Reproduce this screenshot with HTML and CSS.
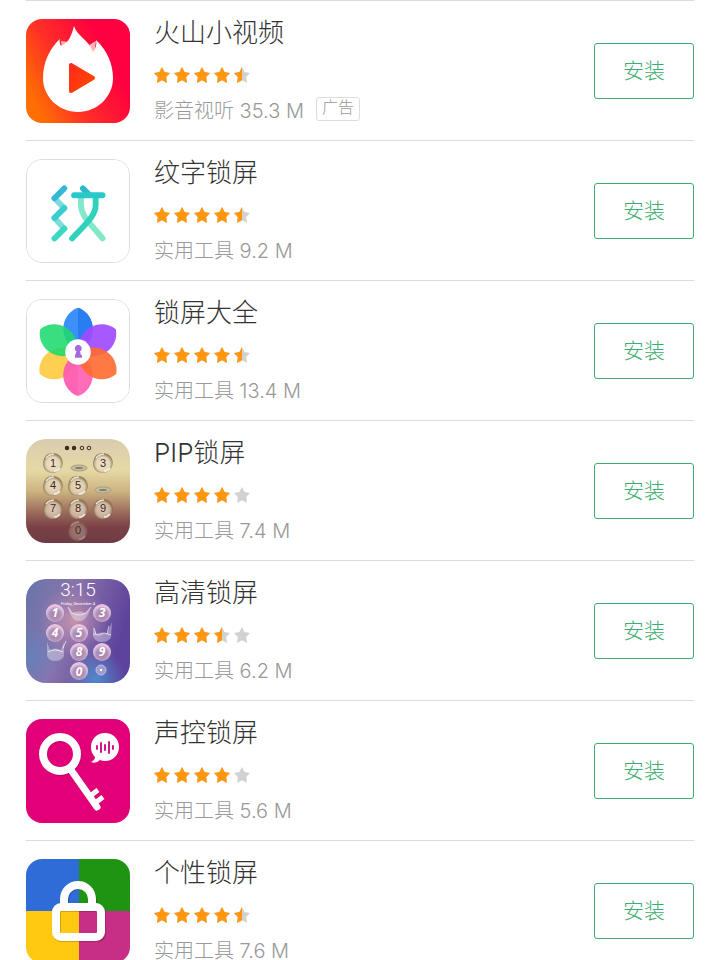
FILE: index.html
```
<!DOCTYPE html>
<html lang="zh-CN">

<head>
    <meta charset="UTF-8" />
    <meta name="viewport" content="width=device-width, initial-scale=1" />
    <title>锁屏</title>
    <link rel="stylesheet" href="styles.css">
</head>

<body>
    <!-- shared star rows -->
    <svg class="defs" aria-hidden="true">
        <defs>
            <path id="star" d="M8 0 L10.6 5 L16 6 L12.2 10 L13 16 L8 13.2 L3 16 L3.800 10 L0 6 L5.400 5Z" />
            <g id="five">
                <use href="#star" /><use href="#star" x="20" /><use href="#star" x="40" /><use href="#star" x="60" /><use href="#star" x="80" />
            </g>
            <clipPath id="c35"><rect width="68" height="16" /></clipPath>
            <clipPath id="c40"><rect width="78" height="16" /></clipPath>
            <clipPath id="c45"><rect width="88" height="16" /></clipPath>
        </defs>
    </svg>

    <ul class="app-list">
        <li class="app">
            <svg class="icon" viewBox="0 0 104 104" aria-hidden="true">
                <defs>
                    <linearGradient id="fire" x1="0" y1="0.9" x2="0.85" y2="0.45">
                        <stop offset="0" stop-color="#ff7200" /><stop offset="0.15" stop-color="#ff6a05" /><stop offset="0.5" stop-color="#ff3026" /><stop offset="1" stop-color="#ff0040" />
                    </linearGradient>
                    <linearGradient id="play" x2="1" y2="1"><stop stop-color="#ff2a1c" /><stop offset="1" stop-color="#ff4a00" /></linearGradient>
                </defs>
                <rect width="104" height="104" fill="url(#fire)" />
                <path d="M35 22 L36 30 L42 23Z M63 26 L68 36 L70 22Z" fill="#ffb5b5" />
                <path d="M48 7 C51 17 62 20 67 33 C70 29 71 25 70 21 C81 31 87 45 87 59 C87 78 71 93 52 93 C33 93 17 78 17 59 C17 43 24 29 34 20 C33 23 34 25 35 27 C43 24 46 15 48 7Z" fill="#fff" />
                <path d="M45 46 V72 L67 59Z" fill="url(#play)" stroke="url(#play)" stroke-width="4" stroke-linejoin="round" />
            </svg>
            <div class="info">
                <h2>火山小视频</h2>
                <svg class="stars" viewBox="0 0 96 16" role="img" aria-label="4.5"><use href="#five" class="off" /><use href="#five" class="on" clip-path="url(#c45)" /></svg>
                <p>影音视听 35.3 M <span class="ad">广告</span></p>
            </div>
            <button type="button">安装</button>
        </li>

        <li class="app">
            <svg class="icon outlined" viewBox="0 0 104 104" aria-hidden="true">
                <rect width="104" height="104" fill="#fff" />
                <g fill="none" stroke-width="6" stroke-linecap="round" stroke-linejoin="round">
                    <path d="M28 39 L38 49 M28 59 L38 70" stroke="#7edcdc" />
                    <path d="M38 29 L28 39" stroke="#35b8d8" />
                    <path d="M38 49 L28 59" stroke="#38cccf" />
                    <path d="M38 70 L28 80" stroke="#3bd8c4" />
                    <path d="M57 29 L62 34" stroke="#2cb9cd" />
                    <path d="M55 38 V46 C55 57 65 65 77 80" stroke="#83e8ca" />
                    <path d="M70 38 V46 C70 57 60 65 46 80" stroke="#30d2bc" />
                    <path d="M48 36 H77" stroke="#2ac9c9" />
                </g>
            </svg>
            <div class="info">
                <h2>纹字锁屏</h2>
                <svg class="stars" viewBox="0 0 96 16" role="img" aria-label="4.5"><use href="#five" class="off" /><use href="#five" class="on" clip-path="url(#c45)" /></svg>
                <p>实用工具 9.2 M</p>
            </div>
            <button type="button">安装</button>
        </li>

        <li class="app">
            <svg class="icon outlined" viewBox="0 0 104 104" aria-hidden="true">
                <defs>
                    <path id="petal" d="M52 8 C61 11 67 20 67 29 C67 41 60 48 52 53 C44 48 37 41 37 29 C37 20 43 11 52 8Z" />
                    <path id="petal-half" d="M52 8 C61 11 67 20 67 29 C67 41 60 48 52 53Z" />
                </defs>
                <rect width="104" height="104" fill="#fff" />
                <use href="#petal" fill="#3d8ffa" />
                <use href="#petal-half" fill="#2a7df0" />
                <use href="#petal" fill="#ffc83a" opacity=".88" transform="rotate(240 52 53)" />
                <use href="#petal" fill="#ff5fb4" opacity=".92" transform="rotate(180 52 53)" />
                <use href="#petal-half" fill="#f04a9f" opacity=".2" transform="rotate(180 52 53)" />
                <use href="#petal" fill="#a04bff" opacity=".92" transform="rotate(59 52 53)" />
                <use href="#petal" fill="#ff6a30" opacity=".9" transform="rotate(120 52 53)" />
                <use href="#petal" fill="#1edb6c" opacity=".88" transform="rotate(301 52 53)" />
                <circle cx="52" cy="53" r="13" fill="#fff" />
                <path d="M52 45.500 a3.800 3.800 0 0 1 2 7 L55 56 H56 V59 H49 V56 L50.500 52.500 a3.800 3.800 0 0 1 1.500 -7Z" fill="#a868e0" />
            </svg>
            <div class="info">
                <h2>锁屏大全</h2>
                <svg class="stars" viewBox="0 0 96 16" role="img" aria-label="4.5"><use href="#five" class="off" /><use href="#five" class="on" clip-path="url(#c45)" /></svg>
                <p>实用工具 13.4 M</p>
            </div>
            <button type="button">安装</button>
        </li>

        <li class="app">
            <svg class="icon rounder" viewBox="0 0 104 104" aria-hidden="true">
                <defs>
                    <linearGradient id="sand" x2="0" y2="1">
                        <stop stop-color="#d9ccb0" /><stop offset=".3" stop-color="#e6d9a5" /><stop offset=".5" stop-color="#cdb480" /><stop offset=".72" stop-color="#97665a" /><stop offset=".85" stop-color="#7a4046" /><stop offset="1" stop-color="#6e3c44" />
                    </linearGradient>
                    <radialGradient id="drop" cx=".5" cy=".55">
                        <stop stop-color="#f4e9d8" stop-opacity=".75" /><stop offset=".7" stop-color="#e4d6bc" stop-opacity=".65" /><stop offset="1" stop-color="#7a6448" stop-opacity=".75" />
                    </radialGradient>
                    <g id="drop-key"><path d="M-9 -4 C-7 -12 6 -12 9 -4 C12 3 6 10 0 10 C-8 10 -12 3 -9 -4Z" fill="url(#drop)" /><path d="M-7 -5 Q-4 -9 1 -9 M7 5 Q5 8 1 8" fill="none" stroke="#fff" stroke-opacity=".75" stroke-width="1.500" /></g>
                </defs>
                <rect width="104" height="104" fill="url(#sand)" />
                <g fill="#3a2a1c"><circle cx="41" cy="9" r="2.200" /><circle cx="48" cy="9" r="2.200" /></g>
                <g fill="none" stroke="#3a2a1c"><circle cx="56" cy="9" r="1.800" /><circle cx="63" cy="9" r="1.800" /></g>
                <use href="#drop-key" x="27" y="24" /><use href="#drop-key" x="77" y="24" />
                <use href="#drop-key" x="27" y="47" /><use href="#drop-key" x="52" y="47" />
                <use href="#drop-key" x="27" y="70" /><use href="#drop-key" x="52" y="70" /><use href="#drop-key" x="77" y="70" />
                <use href="#drop-key" x="52" y="92" opacity=".45" />
                <g fill="#c4bda2" stroke="#a89f82"><ellipse cx="53" cy="29" rx="8" ry="3" /><ellipse cx="77" cy="51" rx="8" ry="3" /></g>
                <g fill="#847c68"><ellipse cx="53" cy="29" rx="4" ry="1" /><ellipse cx="77" cy="51" rx="4" ry="1" /></g>
                <g class="thin-digits">
                    <text x="27" y="28">1</text><text x="77" y="28">3</text>
                    <text x="27" y="50">4</text><text x="52" y="50">5</text>
                    <text x="27" y="73">7</text><text x="52" y="73">8</text><text x="77" y="73">9</text>
                    <text x="52" y="95">0</text>
                </g>
            </svg>
            <div class="info">
                <h2>PIP锁屏</h2>
                <svg class="stars" viewBox="0 0 96 16" role="img" aria-label="4"><use href="#five" class="off" /><use href="#five" class="on" clip-path="url(#c40)" /></svg>
                <p>实用工具 7.4 M</p>
            </div>
            <button type="button">安装</button>
        </li>

        <li class="app">
            <svg class="icon rounder" viewBox="0 0 104 104" aria-hidden="true">
                <defs>
                    <linearGradient id="dusk" x2="1" y2=".3"><stop stop-color="#6875a8" /><stop offset=".45" stop-color="#8a74ac" /><stop offset="1" stop-color="#5e439c" /></linearGradient>
                    <radialGradient id="glow"><stop stop-color="#d39aaa" stop-opacity=".85" /><stop offset="1" stop-color="#b084b4" stop-opacity="0" /></radialGradient>
                    <radialGradient id="teal"><stop stop-color="#4c8fd0" stop-opacity=".9" /><stop offset="1" stop-color="#4c8fd0" stop-opacity="0" /></radialGradient>
                    <radialGradient id="pearl" cx=".5" cy=".6"><stop stop-color="#a9799f" /><stop offset=".65" stop-color="#b394bd" /><stop offset="1" stop-color="#dcc8e2" /></radialGradient>
                    <g id="pearl-key"><circle r="9" fill="url(#pearl)" /><path d="M-6 -5 Q0 -10 6 -5" fill="none" stroke="#f0bedc" stroke-width="2" /></g>
                </defs>
                <rect width="104" height="104" fill="url(#dusk)" />
                <circle cx="48" cy="42" r="36" fill="url(#glow)" />
                <circle cx="70" cy="100" r="30" fill="url(#teal)" />
                <circle cx="6" cy="78" r="32" fill="url(#teal)" opacity=".45" />
                <use href="#pearl-key" x="29" y="34" /><use href="#pearl-key" x="76" y="34" />
                <use href="#pearl-key" x="29" y="54" /><use href="#pearl-key" x="53" y="54" />
                <use href="#pearl-key" x="53" y="73" /><use href="#pearl-key" x="76" y="73" />
                <use href="#pearl-key" x="53" y="92" />
                <circle cx="75" cy="91" r="5" fill="#9f9cd0" stroke="#c4b8e0" />
                <path d="M74 90 L76 92 M76 90 L74 92" stroke="#fff" />
                <!-- water splashes -->
                <g fill="#fff" fill-opacity=".35">
                    <path d="M42 28 L46 34 Q53 31 60 34 L65 28 Q61 42 53 42 Q45 42 42 28Z" />
                    <path d="M67 47 L70 55 Q76 52 81 55 L86 43 L85 58 Q83 63 76 63 Q69 63 67 57Z" />
                    <path d="M21 63 V77 Q23 82 29 82 Q36 82 38 77 V63 L35 71 Q29 68 24 71Z" />
                </g>
                <g fill="none" stroke="#fff" stroke-opacity=".65" stroke-width="1">
                    <path d="M46 34 Q53 38 60 34 M42 28 L46 34 M65 28 L60 34" />
                    <path d="M67 55 L73 56 L78 54 L85 56 M68 49 L70 55 M83 47 L81 55" />
                    <path d="M22 73 Q29 69 37 73 M40 62 L37 69" />
                </g>
                <text class="clock" x="52" y="17">3:15</text>
                <text class="date" x="52" y="26">Friday, December 4</text>
                <g class="bold-digits">
                    <text x="29" y="38">1</text><text x="76" y="38">3</text>
                    <text x="29" y="58">4</text><text x="53" y="58">5</text>
                    <text x="53" y="77">8</text><text x="76" y="77">9</text>
                    <text x="53" y="97">0</text>
                </g>
            </svg>
            <div class="info">
                <h2>高清锁屏</h2>
                <svg class="stars" viewBox="0 0 96 16" role="img" aria-label="3.5"><use href="#five" class="off" /><use href="#five" class="on" clip-path="url(#c35)" /></svg>
                <p>实用工具 6.2 M</p>
            </div>
            <button type="button">安装</button>
        </li>

        <li class="app">
            <svg class="icon" viewBox="0 0 104 104" aria-hidden="true">
                <rect width="104" height="104" fill="#e20079" />
                <g fill="none" stroke="#a8005c" stroke-opacity=".45" transform="translate(1 1)">
                    <circle cx="34" cy="35" r="17" stroke-width="8" /><path d="M45 51 L71 88" stroke-width="7" />
                </g>
                <g fill="none" stroke="#fff" stroke-linecap="round">
                    <circle cx="34" cy="35" r="17" stroke-width="8" />
                    <path d="M45 51 L71 88" stroke-width="7" />
                    <path d="M64 77 L72 71 M69 84 L77 78" stroke-width="5" stroke-linecap="butt" />
                </g>
                <path d="M79 14 C87 14 93 20 93 28 C93 36 87 42 79 42 Q76 42 74 41 Q70 45 65 43 Q69 41 69 38 Q65 34 65 28 C65 20 71 14 79 14Z" fill="#fff" />
                <path d="M71 27 V30 M75 24 V33 M79 26 V31 M83 23 V34 M87 27 V30" stroke="#d0148a" stroke-width="2" stroke-linecap="round" />
            </svg>
            <div class="info">
                <h2>声控锁屏</h2>
                <svg class="stars" viewBox="0 0 96 16" role="img" aria-label="4"><use href="#five" class="off" /><use href="#five" class="on" clip-path="url(#c40)" /></svg>
                <p>实用工具 5.6 M</p>
            </div>
            <button type="button">安装</button>
        </li>

        <li class="app">
            <svg class="icon" viewBox="0 0 104 104" aria-hidden="true">
                <rect width="53" height="52" fill="#306cd8" />
                <rect x="53" width="51" height="52" fill="#1f9412" />
                <rect y="52" width="53" height="52" fill="#ffc911" />
                <rect x="53" y="52" width="51" height="52" fill="#c72f86" />
                <g fill="none" stroke="#000" stroke-opacity=".18" stroke-width="8" transform="translate(1 1)">
                    <path d="M38 46 V40 a14 14 0 0 1 28 0 V46" /><rect x="30" y="48" width="45" height="30" rx="4" />
                </g>
                <g fill="none" stroke="#fff" stroke-width="8">
                    <path d="M38 46 V40 a14 14 0 0 1 28 0 V46" /><rect x="30" y="48" width="45" height="30" rx="5" />
                </g>
            </svg>
            <div class="info">
                <h2>个性锁屏</h2>
                <svg class="stars" viewBox="0 0 96 16" role="img" aria-label="4.5"><use href="#five" class="off" /><use href="#five" class="on" clip-path="url(#c45)" /></svg>
                <p>实用工具 7.6 M</p>
            </div>
            <button type="button">安装</button>
        </li>
    </ul>
</body>

</html>
```
FILE: styles.css
```
:root {
    --line: #dcdcdc;
    --text: #333;
    --muted: #999;
    --green: #3dae6f;
    --star: #ff960f;
    --star-off: #d2d2d2
}

* {
    box-sizing: border-box
}

body {
    margin: 0;
    background: #fff;
    color: var(--text);
    font-family: Inter, "Noto Sans CJK SC", sans-serif;
    font-weight: 300
}

.defs {
    position: absolute;
    width: 0;
    height: 0
}

.app-list {
    list-style: none;
    margin: 0;
    padding: 0 26px
}

.app {
    display: flex;
    align-items: flex-start;
    gap: 24px;
    border-top: 1px solid var(--line);
    padding: 18px 0 15px
}

.icon {
    flex: none;
    width: 104px;
    height: 104px;
    border-radius: 16px
}

.outlined {
    border: 1px solid #ddd
}

.rounder {
    border-radius: 20px
}

.info {
    flex: 1;
    min-width: 0
}

h2 {
    margin: 0;
    font-size: 26px;
    line-height: 28px;
    font-weight: 300
}

.stars {
    display: block;
    width: 96px;
    height: 16px;
    margin: 20px 0 14px
}

.on {
    fill: var(--star)
}

.off {
    fill: var(--star-off)
}

p {
    display: flex;
    align-items: flex-start;
    gap: 12px;
    margin: 0;
    font-size: 20px;
    line-height: 28px;
    color: var(--muted)
}

.ad {
    border: 1px solid #ddd;
    border-radius: 3px;
    padding: 0 5px 4px;
    font-size: 16px;
    line-height: 18px
}

button {
    flex: none;
    width: 100px;
    height: 56px;
    margin-top: 24px;
    padding: 0 0 4px;
    border: 1px solid var(--green);
    border-radius: 3px;
    background: #fff;
    color: var(--green);
    font: inherit;
    font-size: 21px;
    cursor: pointer
}

text {
    text-anchor: middle;
    fill: #fff
}

.thin-digits text {
    font: 400 11px "Liberation Sans", sans-serif;
    fill: #3a2a26
}

.bold-digits text {
    font: italic 700 12px "Open Sans", sans-serif
}

.clock {
    font: 300 19px Roboto, sans-serif
}

.date {
    font: 400 4px Roboto, sans-serif
}
```
